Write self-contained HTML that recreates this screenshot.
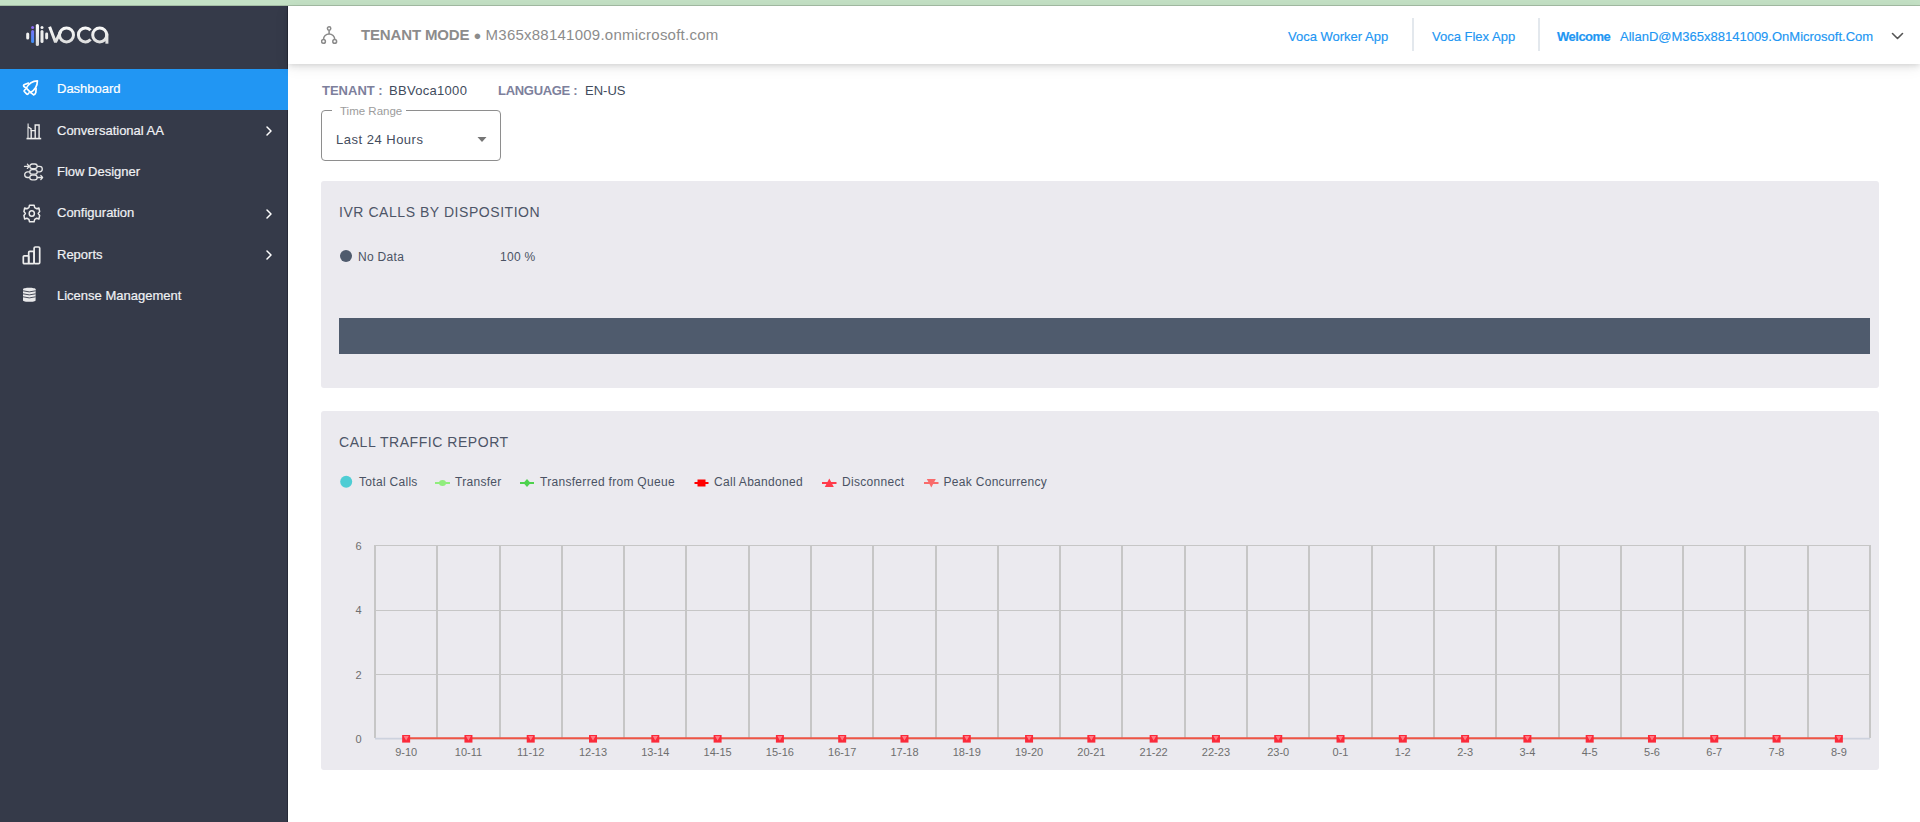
<!DOCTYPE html>
<html><head><meta charset="utf-8">
<style>
*{box-sizing:border-box;margin:0;padding:0}
html,body{width:1920px;height:822px;overflow:hidden;background:#fff;font-family:"Liberation Sans",sans-serif}
.abs{position:absolute;white-space:nowrap}
.topstrip{position:absolute;left:0;top:0;width:1920px;height:6px;background:#c4e1c5;border-bottom:1px solid #a3bca3}
.sidebar{position:absolute;left:0;top:6px;width:288px;height:816px;background:#353a49;border-right:1px solid #262a38}
.item{position:absolute;left:0;width:287px;height:41px;color:#f0f1f4;font-size:13px;-webkit-text-stroke:0.2px currentColor}
.item.active{background:#2196f3;color:#fff;width:288px}
.item.active .lbl{top:-1px}
.item .lbl{position:absolute;left:57px;top:-0.5px;line-height:41px}
.item svg{position:absolute;overflow:visible}
.header{position:absolute;left:288px;top:6px;width:1632px;height:58px;background:#fff;box-shadow:0 2px 4px -1px rgba(0,0,0,0.07),0 4px 6px 0 rgba(0,0,0,0.05),0 3px 14px 0 rgba(0,0,0,0.08)}
.hlink{position:absolute;top:2px;line-height:58px;font-size:13px;color:#2196f3;-webkit-text-stroke:0.15px currentColor}
.sep{position:absolute;top:12px;width:2px;height:33px;background:#e3e8ed}
.panel{position:absolute;left:321px;width:1558px;background:#ebeaef;border-radius:3px}
.ptitle{position:absolute;left:339px;font-size:14px;color:#4d5567;letter-spacing:0.55px;line-height:16px}
.leg{position:absolute;font-size:12px;color:#4a5263;line-height:14px;letter-spacing:0.3px}
</style></head><body>
<div class="topstrip"></div>
<div class="sidebar">
  <svg class="abs" style="left:0;top:-6px" width="120" height="64" viewBox="0 0 120 64">
    <defs><linearGradient id="gi" gradientUnits="userSpaceOnUse" x1="0" y1="26" x2="0" y2="43"><stop offset="0" stop-color="#8c6cf6"/><stop offset="1" stop-color="#3e8ef6"/></linearGradient>
    <linearGradient id="gw" gradientUnits="userSpaceOnUse" x1="0" y1="24" x2="0" y2="46"><stop offset="0" stop-color="#ffffff"/><stop offset="1" stop-color="#d8d8d8"/></linearGradient></defs>
    <rect x="26.2" y="32.6" width="3" height="6.9" rx="1.5" fill="#f2f2f2"/>
    <rect x="31.1" y="25.9" width="3" height="3" rx="1.5" fill="#8c6cf6"/>
    <rect x="31.1" y="30.1" width="3" height="12.9" rx="1.5" fill="url(#gi)"/>
    <rect x="35.8" y="24" width="3.2" height="22" rx="1.6" fill="url(#gw)"/>
    <rect x="40.5" y="26" width="3" height="3" rx="1.5" fill="#f4f4f4"/>
    <rect x="40.5" y="30.1" width="3" height="12.9" rx="1.5" fill="#ededed"/>
    <rect x="45.2" y="32.6" width="2.9" height="6.9" rx="1.45" fill="#eeeeee"/>
    <g fill="none" stroke="url(#gw)" stroke-width="3">
      <path d="M49.6 26.8 L55.5 42.2 L61 30.8" stroke-linejoin="bevel"/>
      <circle cx="66.5" cy="34.9" r="7"/>
      <path d="M90.6 30.2 A7 7 0 1 0 90.6 39.6"/>
      <circle cx="99.7" cy="34.9" r="7"/>
      <line x1="106.9" y1="33.5" x2="106.9" y2="43.7"/>
    </g>
  </svg>
  <div class="item active" style="top:63px"><span class="lbl">Dashboard</span>
    <svg style="left:20px;top:9px" width="20" height="20" viewBox="0 0 20 20" fill="none" stroke="#fff" stroke-width="1.7" stroke-linejoin="round" stroke-linecap="round">
      <path d="M17.4 2.8 C13 2.8 9.2 4.6 6.3 10.1 L10.5 14.4 C15.4 11.8 17.4 8 17.4 2.8 Z"/>
      <path d="M8.4 5.1 L4.6 6.5 Q3 7.3 3.9 8.5 L6.3 10.1"/>
      <path d="M16.1 10.6 L15.8 14.6 Q15.2 16.5 13.6 16.9 L10.5 14.4"/>
      <path d="M5.4 11.3 L4.3 12.5 Q3.9 13 4.3 13.5 L6.8 16.2 Q7.3 16.6 7.8 16.2 L8.9 15"/>
    </svg>
  </div>
  <div class="item" style="top:104.3px"><span class="lbl">Conversational AA</span>
    <svg style="left:26px;top:12.5px" width="16" height="17" viewBox="0 0 16 17" fill="none" stroke="#ededed" stroke-width="1.4">
      <path d="M0.5 15.6 H15.2" stroke-width="1.6"/>
      <path d="M9.2 15 V2 H13.1 V15"/>
      <path d="M5.2 15 V7.6 H9.2"/>
      <path d="M2 15 V5 M2.1 5 L2.1 0.4" stroke-width="1.1"/><path d="M2 4 L5 5.6 V7.6"/>
    </svg>
    <svg style="left:266px;top:16px" width="8" height="10" viewBox="0 0 8 10" fill="none" stroke="#fff" stroke-width="1.5" stroke-linecap="round" stroke-linejoin="round"><path d="M1 1 L5 5 L1 9"/></svg>
  </div>
  <div class="item" style="top:145.6px"><span class="lbl">Flow Designer</span>
    <svg style="left:24px;top:11px" width="20" height="18" viewBox="0 0 20 18" fill="none" stroke="#e8e8e8" stroke-width="1.3">
      <rect x="5.8" y="1" width="7.4" height="4.6" rx="2.3"/>
      <rect x="5.8" y="6.6" width="7.4" height="4.6" rx="2.3"/>
      <rect x="5.8" y="12.2" width="7.4" height="4.6" rx="2.3"/>
      <path d="M13.2 3.3 H15.5 A2.8 2.8 0 0 1 15.5 8.9 H13.2"/>
      <path d="M5.8 8.9 H3.5 A2.8 2.8 0 0 0 3.5 14.5 H5.8"/>
      <path d="M0.5 3.3 H5.2 M3.4 1.2 L5.2 3.3 L3.4 5.4" stroke-linejoin="round" stroke-linecap="round"/>
      <path d="M13.2 14.5 H18.6 M16.8 12.4 L18.6 14.5 L16.8 16.6" stroke-linejoin="round" stroke-linecap="round"/>
    </svg>
  </div>
  <div class="item" style="top:186.9px"><span class="lbl">Configuration</span>
    <svg style="left:22.7px;top:11px" width="17.6" height="19" preserveAspectRatio="none" viewBox="0 0 19 19" fill="none" stroke="#ececec" stroke-width="1.6" stroke-linejoin="round">
      <path d="M7 1.2 H12 L12.6 3.6 L14.8 4.8 L17.2 4 L18 7.6 L16.4 9.5 L18 11.4 L17.2 15 L14.8 14.2 L12.6 15.4 L12 17.8 H7 L6.4 15.4 L4.2 14.2 L1.8 15 L1 11.4 L2.6 9.5 L1 7.6 L1.8 4 L4.2 4.8 L6.4 3.6 Z"/>
      <circle cx="9.5" cy="9.5" r="2.8"/>
    </svg>
    <svg style="left:266px;top:16px" width="8" height="10" viewBox="0 0 8 10" fill="none" stroke="#fff" stroke-width="1.5" stroke-linecap="round" stroke-linejoin="round"><path d="M1 1 L5 5 L1 9"/></svg>
  </div>
  <div class="item" style="top:228.2px"><span class="lbl">Reports</span>
    <svg style="left:22px;top:12px" width="19" height="19" viewBox="0 0 19 19" fill="none" stroke="#ededed" stroke-width="1.7" stroke-linejoin="round">
      <rect x="1.3" y="9.8" width="5.4" height="7.9" rx="1"/>
      <rect x="6.7" y="5.4" width="5.4" height="12.3" rx="1"/>
      <rect x="12.1" y="1" width="5.6" height="16.7" rx="1.2"/>
    </svg>
    <svg style="left:266px;top:16px" width="8" height="10" viewBox="0 0 8 10" fill="none" stroke="#fff" stroke-width="1.5" stroke-linecap="round" stroke-linejoin="round"><path d="M1 1 L5 5 L1 9"/></svg>
  </div>
  <div class="item" style="top:269.5px"><span class="lbl">License Management</span>
    <svg style="left:22px;top:10.3px" width="15" height="17" viewBox="0 0 15 17" fill="#e9e9eb">
      <path d="M1 3.2 C1 1.2 13.6 1.2 13.6 3.2 V14.2 C13.6 16.4 1 16.4 1 14.2 Z"/>
      <g stroke="#353a49" stroke-width="0.9" fill="none"><path d="M1 4.8 Q7.3 7 13.6 4.8"/><path d="M1 7.8 Q7.3 10 13.6 7.8"/><path d="M1 10.8 Q7.3 13 13.6 10.8"/></g>
    </svg>
  </div>
</div>
<div class="header">
  <svg class="abs" style="left:33px;top:20px" width="17" height="19" viewBox="0 0 17 19" fill="none" stroke="#8a8a8a" stroke-width="1.5">
    <circle cx="8.1" cy="2.5" r="1.7"/><circle cx="2.5" cy="15.4" r="1.9"/><circle cx="13.7" cy="15.4" r="1.9"/>
    <path d="M8.1 4.2 V8"/><path d="M2.5 13.5 V13.3 A5.6 5.3 0 0 1 13.7 13.3 V13.5"/>
  </svg>
  <div class="abs" style="left:73px;top:0;line-height:58px;font-size:15px;color:#8c8c8c"><b style="letter-spacing:-0.15px">TENANT MODE</b> <span style="font-size:13px">&#9679;</span> <span style="letter-spacing:0.24px">M365x88141009.onmicrosoft.com</span></div>
  <div class="hlink" style="left:1000px">Voca Worker App</div>
  <div class="sep" style="left:1124px"></div>
  <div class="hlink" style="left:1144px">Voca Flex App</div>
  <div class="sep" style="left:1250px"></div>
  <div class="hlink" style="left:1269px;font-weight:bold;letter-spacing:-0.5px">Welcome</div>
  <div class="hlink" style="left:1332px">AllanD@M365x88141009.OnMicrosoft.Com</div>
  <svg class="abs" style="left:1603px;top:26px" width="13" height="9" viewBox="0 0 13 9" fill="none" stroke="#555" stroke-width="1.6" stroke-linecap="round" stroke-linejoin="round"><path d="M1.5 1.5 L6.5 6.5 L11.5 1.5"/></svg>
</div>
<div class="abs" style="left:322px;top:84px;font-size:13px;line-height:14px;color:#7d809c;font-weight:bold">TENANT :</div>
<div class="abs" style="left:389px;top:84px;font-size:13px;line-height:14px;color:#414b5c;letter-spacing:0.3px">BBVoca1000</div>
<div class="abs" style="left:498px;top:84px;font-size:13px;line-height:14px;color:#7d809c;font-weight:bold;letter-spacing:-0.3px">LANGUAGE :</div>
<div class="abs" style="left:585px;top:84px;font-size:13px;line-height:14px;color:#414b5c">EN-US</div>
<div class="abs" style="left:321px;top:110px;width:180px;height:51px;border:1px solid #8e8e8e;border-radius:4px"></div>
<div class="abs" style="left:332px;top:104px;width:74px;height:10px;background:#fff"></div>
<div class="abs" style="left:340px;top:104px;font-size:11.5px;line-height:14px;color:#9c9c9c">Time Range</div>
<div class="abs" style="left:336px;top:132px;font-size:13px;line-height:16px;color:#434c5d;letter-spacing:0.5px">Last 24 Hours</div>
<svg class="abs" style="left:476px;top:136px" width="12" height="7" viewBox="0 0 12 7"><path d="M1.5 1 L10.5 1 L6 6 Z" fill="#757575"/></svg>

<div class="panel" style="top:181px;height:207px"></div>
<div class="ptitle" style="top:204px">IVR CALLS BY DISPOSITION</div>
<svg class="abs" style="left:340px;top:250px" width="12" height="12"><circle cx="6" cy="6" r="6" fill="#4f5b6d"/></svg>
<div class="leg" style="left:358px;top:250px">No Data</div>
<div class="leg" style="left:500px;top:250px">100 %</div>
<div class="abs" style="left:339px;top:318px;width:1531px;height:36px;background:#4f5b6d"></div>

<div class="panel" style="top:411px;height:359px"></div>
<div class="ptitle" style="top:434px">CALL TRAFFIC REPORT</div>
<div class="leg" style="left:359px;top:475px">Total Calls</div>
<div class="leg" style="left:455px;top:475px">Transfer</div>
<div class="leg" style="left:540px;top:475px">Transferred from Queue</div>
<div class="leg" style="left:714px;top:475px">Call Abandoned</div>
<div class="leg" style="left:842px;top:475px">Disconnect</div>
<div class="leg" style="left:943.5px;top:475px">Peak Concurrency</div>
<svg class="abs" style="left:0;top:0" width="1920" height="822" viewBox="0 0 1920 822">
  <circle cx="346.2" cy="481.7" r="6" fill="#4ecdd4"/>
  <g stroke-width="2">
    <line x1="435" y1="483" x2="450" y2="483" stroke="#90ed7d"/><ellipse cx="442.5" cy="483" rx="3.5" ry="3" fill="#90ed7d"/>
    <line x1="520" y1="483" x2="534" y2="483" stroke="#4ed24e"/><path d="M527 479 L530.5 483 L527 487 L523.5 483 Z" fill="#4ed24e"/>
    <line x1="694.5" y1="483" x2="708.5" y2="483" stroke="#ff0000"/><rect x="697.5" y="479.5" width="8" height="7" fill="#ff0000"/>
    <line x1="822" y1="483" x2="836.5" y2="483" stroke="#ff3b4b"/><path d="M829.3 478.5 L833.8 487 L824.8 487 Z" fill="#ff3b4b"/>
    <line x1="924" y1="483" x2="938.5" y2="483" stroke="#f96b6b"/><path d="M926.8 479 L935.8 479 L931.3 487.5 Z" fill="#f96b6b"/>
  </g>
  <g stroke="#c6c6c6" shape-rendering="crispEdges"><line x1="375" y1="545.5" x2="1870" y2="545.5" stroke-width="1"/><line x1="375" y1="610.5" x2="1870" y2="610.5" stroke-width="1"/><line x1="375" y1="674.5" x2="1870" y2="674.5" stroke-width="1"/><line x1="375" y1="545" x2="375" y2="738" stroke-width="2"/><line x1="437" y1="545" x2="437" y2="738" stroke-width="2"/><line x1="500" y1="545" x2="500" y2="738" stroke-width="2"/><line x1="562" y1="545" x2="562" y2="738" stroke-width="2"/><line x1="624" y1="545" x2="624" y2="738" stroke-width="2"/><line x1="686" y1="545" x2="686" y2="738" stroke-width="2"/><line x1="749" y1="545" x2="749" y2="738" stroke-width="2"/><line x1="811" y1="545" x2="811" y2="738" stroke-width="2"/><line x1="873" y1="545" x2="873" y2="738" stroke-width="2"/><line x1="936" y1="545" x2="936" y2="738" stroke-width="2"/><line x1="998" y1="545" x2="998" y2="738" stroke-width="2"/><line x1="1060" y1="545" x2="1060" y2="738" stroke-width="2"/><line x1="1122" y1="545" x2="1122" y2="738" stroke-width="2"/><line x1="1185" y1="545" x2="1185" y2="738" stroke-width="2"/><line x1="1247" y1="545" x2="1247" y2="738" stroke-width="2"/><line x1="1309" y1="545" x2="1309" y2="738" stroke-width="2"/><line x1="1372" y1="545" x2="1372" y2="738" stroke-width="2"/><line x1="1434" y1="545" x2="1434" y2="738" stroke-width="2"/><line x1="1496" y1="545" x2="1496" y2="738" stroke-width="2"/><line x1="1559" y1="545" x2="1559" y2="738" stroke-width="2"/><line x1="1621" y1="545" x2="1621" y2="738" stroke-width="2"/><line x1="1683" y1="545" x2="1683" y2="738" stroke-width="2"/><line x1="1745" y1="545" x2="1745" y2="738" stroke-width="2"/><line x1="1808" y1="545" x2="1808" y2="738" stroke-width="2"/><line x1="1870" y1="545" x2="1870" y2="738" stroke-width="2"/></g>
  <line x1="375" y1="738.6" x2="1870" y2="738.6" stroke="#cdd2de" stroke-width="1.8"/>
  <line x1="406.15" y1="738.3" x2="1838.85" y2="738.3" stroke="#ee5544" stroke-width="2"/>
  <g fill="#fb2a3a"><rect x="402.15" y="735" width="8" height="7.6"/><rect x="464.44" y="735" width="8" height="7.6"/><rect x="526.73" y="735" width="8" height="7.6"/><rect x="589.02" y="735" width="8" height="7.6"/><rect x="651.31" y="735" width="8" height="7.6"/><rect x="713.60" y="735" width="8" height="7.6"/><rect x="775.90" y="735" width="8" height="7.6"/><rect x="838.19" y="735" width="8" height="7.6"/><rect x="900.48" y="735" width="8" height="7.6"/><rect x="962.77" y="735" width="8" height="7.6"/><rect x="1025.06" y="735" width="8" height="7.6"/><rect x="1087.35" y="735" width="8" height="7.6"/><rect x="1149.65" y="735" width="8" height="7.6"/><rect x="1211.94" y="735" width="8" height="7.6"/><rect x="1274.23" y="735" width="8" height="7.6"/><rect x="1336.52" y="735" width="8" height="7.6"/><rect x="1398.81" y="735" width="8" height="7.6"/><rect x="1461.10" y="735" width="8" height="7.6"/><rect x="1523.40" y="735" width="8" height="7.6"/><rect x="1585.69" y="735" width="8" height="7.6"/><rect x="1647.98" y="735" width="8" height="7.6"/><rect x="1710.27" y="735" width="8" height="7.6"/><rect x="1772.56" y="735" width="8" height="7.6"/><rect x="1834.85" y="735" width="8" height="7.6"/></g>
  <g fill="#ff7b84"><path d="M403.55 736 L408.75 736 L406.15 740.5 Z"/><path d="M465.84 736 L471.04 736 L468.44 740.5 Z"/><path d="M528.13 736 L533.33 736 L530.73 740.5 Z"/><path d="M590.42 736 L595.62 736 L593.02 740.5 Z"/><path d="M652.71 736 L657.91 736 L655.31 740.5 Z"/><path d="M715.00 736 L720.20 736 L717.60 740.5 Z"/><path d="M777.30 736 L782.50 736 L779.90 740.5 Z"/><path d="M839.59 736 L844.79 736 L842.19 740.5 Z"/><path d="M901.88 736 L907.08 736 L904.48 740.5 Z"/><path d="M964.17 736 L969.37 736 L966.77 740.5 Z"/><path d="M1026.46 736 L1031.66 736 L1029.06 740.5 Z"/><path d="M1088.75 736 L1093.95 736 L1091.35 740.5 Z"/><path d="M1151.05 736 L1156.25 736 L1153.65 740.5 Z"/><path d="M1213.34 736 L1218.54 736 L1215.94 740.5 Z"/><path d="M1275.63 736 L1280.83 736 L1278.23 740.5 Z"/><path d="M1337.92 736 L1343.12 736 L1340.52 740.5 Z"/><path d="M1400.21 736 L1405.41 736 L1402.81 740.5 Z"/><path d="M1462.50 736 L1467.70 736 L1465.10 740.5 Z"/><path d="M1524.80 736 L1530.00 736 L1527.40 740.5 Z"/><path d="M1587.09 736 L1592.29 736 L1589.69 740.5 Z"/><path d="M1649.38 736 L1654.58 736 L1651.98 740.5 Z"/><path d="M1711.67 736 L1716.87 736 L1714.27 740.5 Z"/><path d="M1773.96 736 L1779.16 736 L1776.56 740.5 Z"/><path d="M1836.25 736 L1841.45 736 L1838.85 740.5 Z"/></g>
  <g font-family="Liberation Sans" font-size="11" fill="#6e6e6e" text-anchor="end">
    <text x="361.5" y="550">6</text><text x="361.5" y="614.3">4</text><text x="361.5" y="678.6">2</text><text x="361.5" y="742.8">0</text>
  </g>
  <g font-family="Liberation Sans" font-size="11" fill="#6e6e6e" text-anchor="middle"><text x="406.15" y="756">9-10</text><text x="468.44" y="756">10-11</text><text x="530.73" y="756">11-12</text><text x="593.02" y="756">12-13</text><text x="655.31" y="756">13-14</text><text x="717.60" y="756">14-15</text><text x="779.90" y="756">15-16</text><text x="842.19" y="756">16-17</text><text x="904.48" y="756">17-18</text><text x="966.77" y="756">18-19</text><text x="1029.06" y="756">19-20</text><text x="1091.35" y="756">20-21</text><text x="1153.65" y="756">21-22</text><text x="1215.94" y="756">22-23</text><text x="1278.23" y="756">23-0</text><text x="1340.52" y="756">0-1</text><text x="1402.81" y="756">1-2</text><text x="1465.10" y="756">2-3</text><text x="1527.40" y="756">3-4</text><text x="1589.69" y="756">4-5</text><text x="1651.98" y="756">5-6</text><text x="1714.27" y="756">6-7</text><text x="1776.56" y="756">7-8</text><text x="1838.85" y="756">8-9</text></g>
</svg>
</body></html>
